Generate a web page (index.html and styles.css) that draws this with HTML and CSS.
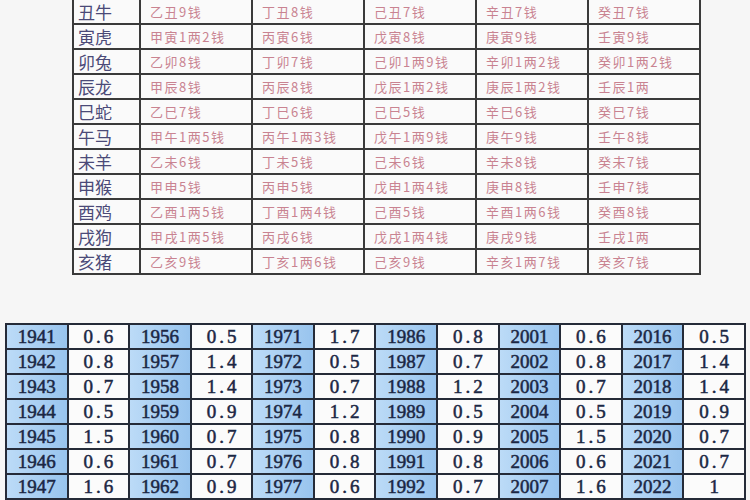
FILE: index.html
```html
<!DOCTYPE html>
<html lang="zh">
<head>
<meta charset="utf-8">
<link rel="stylesheet" href="styles.css">
</head>
<body>
<div class="page">
  <div class="top-wrap">
    <table class="zodiac">
      <colgroup>
        <col class="c-name"><col class="c-v"><col class="c-v"><col class="c-v"><col class="c-v"><col class="c-v">
      </colgroup>
      <tr><td class="name">丑牛</td><td>乙丑9钱</td><td>丁丑8钱</td><td>己丑7钱</td><td>辛丑7钱</td><td>癸丑7钱</td></tr>
      <tr><td class="name">寅虎</td><td>甲寅1两2钱</td><td>丙寅6钱</td><td>戊寅8钱</td><td>庚寅9钱</td><td>壬寅9钱</td></tr>
      <tr><td class="name">卯兔</td><td>乙卯8钱</td><td>丁卯7钱</td><td>己卯1两9钱</td><td>辛卯1两2钱</td><td>癸卯1两2钱</td></tr>
      <tr><td class="name">辰龙</td><td>甲辰8钱</td><td>丙辰8钱</td><td>戊辰1两2钱</td><td>庚辰1两2钱</td><td>壬辰1两</td></tr>
      <tr><td class="name">巳蛇</td><td>乙巳7钱</td><td>丁巳6钱</td><td>己巳5钱</td><td>辛巳6钱</td><td>癸巳7钱</td></tr>
      <tr><td class="name">午马</td><td>甲午1两5钱</td><td>丙午1两3钱</td><td>戊午1两9钱</td><td>庚午9钱</td><td>壬午8钱</td></tr>
      <tr><td class="name">未羊</td><td>乙未6钱</td><td>丁未5钱</td><td>己未6钱</td><td>辛未8钱</td><td>癸未7钱</td></tr>
      <tr><td class="name">申猴</td><td>甲申5钱</td><td>丙申5钱</td><td>戊申1两4钱</td><td>庚申8钱</td><td>壬申7钱</td></tr>
      <tr><td class="name">酉鸡</td><td>乙酉1两5钱</td><td>丁酉1两4钱</td><td>己酉5钱</td><td>辛酉1两6钱</td><td>癸酉8钱</td></tr>
      <tr><td class="name">戌狗</td><td>甲戌1两5钱</td><td>丙戌6钱</td><td>戊戌1两4钱</td><td>庚戌9钱</td><td>壬戌1两</td></tr>
      <tr><td class="name">亥猪</td><td>乙亥9钱</td><td>丁亥1两6钱</td><td>己亥9钱</td><td>辛亥1两7钱</td><td>癸亥7钱</td></tr>
    </table>
  </div>
  <div class="bottom-wrap">
    <table class="years">
      <tr><td class="y">1941</td><td class="v">0.6</td><td class="y">1956</td><td class="v">0.5</td><td class="y">1971</td><td class="v">1.7</td><td class="y">1986</td><td class="v">0.8</td><td class="y">2001</td><td class="v">0.6</td><td class="y">2016</td><td class="v">0.5</td></tr>
      <tr><td class="y">1942</td><td class="v">0.8</td><td class="y">1957</td><td class="v">1.4</td><td class="y">1972</td><td class="v">0.5</td><td class="y">1987</td><td class="v">0.7</td><td class="y">2002</td><td class="v">0.8</td><td class="y">2017</td><td class="v">1.4</td></tr>
      <tr><td class="y">1943</td><td class="v">0.7</td><td class="y">1958</td><td class="v">1.4</td><td class="y">1973</td><td class="v">0.7</td><td class="y">1988</td><td class="v">1.2</td><td class="y">2003</td><td class="v">0.7</td><td class="y">2018</td><td class="v">1.4</td></tr>
      <tr><td class="y">1944</td><td class="v">0.5</td><td class="y">1959</td><td class="v">0.9</td><td class="y">1974</td><td class="v">1.2</td><td class="y">1989</td><td class="v">0.5</td><td class="y">2004</td><td class="v">0.5</td><td class="y">2019</td><td class="v">0.9</td></tr>
      <tr><td class="y">1945</td><td class="v">1.5</td><td class="y">1960</td><td class="v">0.7</td><td class="y">1975</td><td class="v">0.8</td><td class="y">1990</td><td class="v">0.9</td><td class="y">2005</td><td class="v">1.5</td><td class="y">2020</td><td class="v">0.7</td></tr>
      <tr><td class="y">1946</td><td class="v">0.6</td><td class="y">1961</td><td class="v">0.7</td><td class="y">1976</td><td class="v">0.8</td><td class="y">1991</td><td class="v">0.8</td><td class="y">2006</td><td class="v">0.6</td><td class="y">2021</td><td class="v">0.7</td></tr>
      <tr><td class="y">1947</td><td class="v">1.6</td><td class="y">1962</td><td class="v">0.9</td><td class="y">1977</td><td class="v">0.6</td><td class="y">1992</td><td class="v">0.7</td><td class="y">2007</td><td class="v">1.6</td><td class="y">2022</td><td class="v">1</td></tr>
    </table>
  </div>
</div>
</body>
</html>
```
FILE: styles.css
```css
html, body {
  margin: 0;
  padding: 0;
}
body {
  background: #f6f6f6;
  width: 750px;
  height: 500px;
  overflow: hidden;
}
.page {
  display: flex;
  flex-direction: column;
}
.top-wrap {
  padding-left: 72px;
  margin-top: -2px;
}
.zodiac {
  border-collapse: collapse;
  table-layout: fixed;
  width: 629px;
  background: #fafafa;
  font-family: "Noto Sans CJK SC", sans-serif;
}
.zodiac .c-name { width: 67px; }
.zodiac .c-v { width: 112px; }
.zodiac td {
  border: 2px solid #3a3a3a;
  height: 23px;
  padding: 0 0 0 9px;
  font-size: 13px;
  letter-spacing: 1.5px;
  color: #c98391;
  line-height: 23px;
  white-space: nowrap;
}
.zodiac td.name {
  padding-left: 4px;
  font-size: 17px;
  letter-spacing: 0;
  color: #4b4a78;
}
.bottom-wrap {
  padding: 0 0 0 5px;
  margin-top: 48px;
}
.years {
  border-collapse: collapse;
  table-layout: fixed;
  width: 741px;
  background: #fbfbfb;
  font-family: "Liberation Serif", serif;
}
.years td {
  border: 2px solid #252b38;
  height: 23px;
  padding: 0;
  text-align: center;
  font-size: 19px;
  font-weight: normal;
  -webkit-text-stroke: 0.5px #1b2744;
  line-height: 23px;
  color: #1b2744;
}
.years td.y {
  background: linear-gradient(90deg, #bcdbf7, #98c4ee);
}
.years td.v {
  letter-spacing: 3px;
  text-indent: 3px;
}
```
